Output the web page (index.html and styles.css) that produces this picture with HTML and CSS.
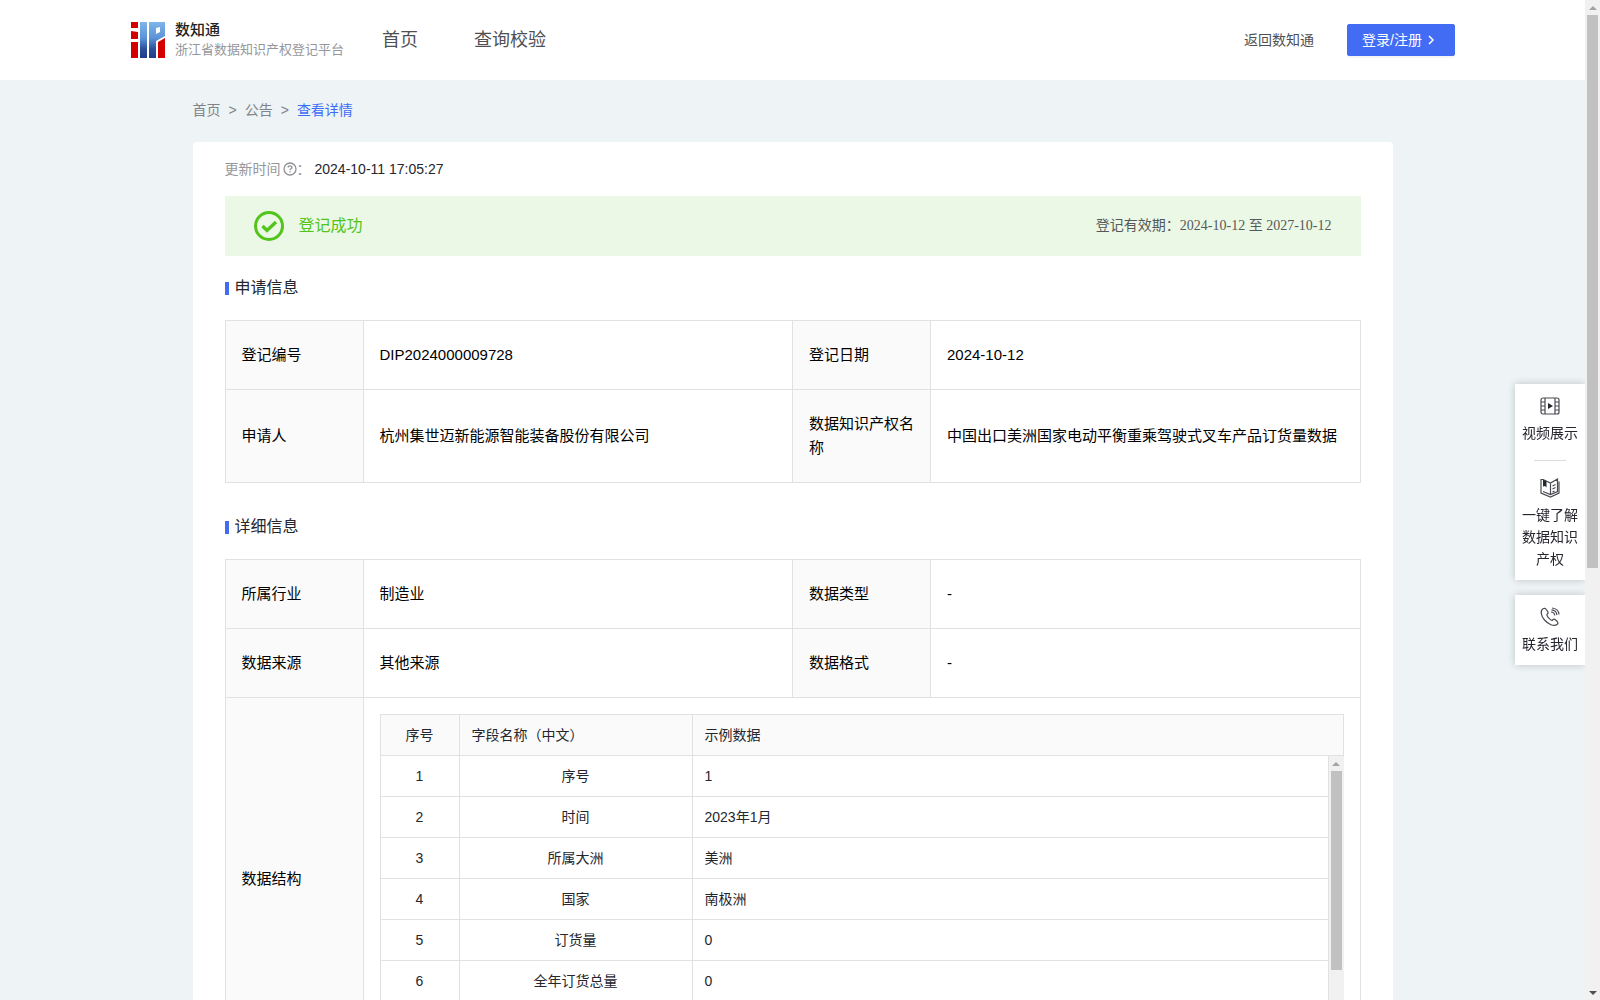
FILE: index.html
```html
<!DOCTYPE html>
<html lang="zh-CN">
<head>
    <meta charset="UTF-8">
    <meta name="viewport" content="width=device-width, initial-scale=1.0">
    <title>数知通</title>
    <link rel="stylesheet" href="styles.css">
</head>
<body>
    <div class="page">
        <header class="header">
            <a class="logo" href="#">
                <svg class="logo__icon" viewBox="0 0 34 36" width="34" height="36">
                    <defs>
                        <linearGradient id="blue" x1="0" y1="0" x2="0" y2="36" gradientUnits="userSpaceOnUse">
                            <stop offset="0" stop-color="#7fb5ea"/>
                            <stop offset="0.45" stop-color="#5b92d6"/>
                            <stop offset="0.75" stop-color="#2c4f9c"/>
                            <stop offset="1" stop-color="#233c86"/>
                        </linearGradient>
                    </defs>
                    <path fill="#d40000" d="M0 0h7v6H0zM0 9l7 1v7H0zM0 20h7v16H0zM27 20l7-4v20h-7z"/>
                    <path fill="url(#blue)" d="M9 0h7v36H9z"/>
                    <path fill="url(#blue)" fill-rule="evenodd" d="M18 0h16v14l-9 5v17h-7zM25 6v6l4-2V5z"/>
                </svg>
                <span class="logo__text">
                    <span class="logo__name">数知通</span>
                    <span class="logo__desc">浙江省数据知识产权登记平台</span>
                </span>
            </a>
            <nav class="nav">
                <a href="#">首页</a>
                <a href="#">查询校验</a>
            </nav>
            <a class="header__back" href="#">返回数知通</a>
            <button class="login" type="button">登录/注册
                <svg viewBox="0 0 8 10" width="8" height="10"><path d="M2 1l4 4-4 4" fill="none" stroke="#fff" stroke-width="1.5"/></svg>
            </button>
        </header>

        <main class="main">
            <nav class="crumbs">
                <a href="#">首页</a>
                <span>&gt;</span>
                <a href="#">公告</a>
                <span>&gt;</span>
                <a class="crumbs__current" href="#">查看详情</a>
            </nav>

            <div class="card">
                <div class="update">
                    <span class="update__label">更新时间</span>
                    <svg class="update__icon" viewBox="0 0 14 14" width="14" height="14" fill="none" stroke="#8f9197" stroke-width="1.3">
                        <circle cx="7" cy="7" r="6"/>
                        <path d="M5.1 5.6c0-2.4 3.8-2.4 3.8 0 0 1.2-1.9 1.3-1.9 2.7M7 9.3v1.3"/>
                    </svg>
                    <span class="update__label">：</span>
                    <span class="update__time">2024-10-11 17:05:27</span>
                </div>

                <div class="result">
                    <svg viewBox="0 0 30 30" width="30" height="30" fill="none" stroke="#52c41a">
                        <circle cx="15" cy="15" r="13.5" stroke-width="3"/>
                        <path d="M8.500 15l4.500 4.500L22 11" stroke-width="3.4"/>
                    </svg>
                    <span class="result__status">登记成功</span>
                    <span class="result__period">登记有效期：2024-10-12 至 2027-10-12</span>
                </div>

                <h2 class="title">申请信息</h2>
                <table class="info">
                    <colgroup><col class="info__name"><col><col class="info__name"><col></colgroup>
                    <tr>
                        <th scope="row">登记编号</th>
                        <td>DIP2024000009728</td>
                        <th scope="row">登记日期</th>
                        <td>2024-10-12</td>
                    </tr>
                    <tr>
                        <th scope="row">申请人</th>
                        <td>杭州集世迈新能源智能装备股份有限公司</td>
                        <th scope="row">数据知识产权名称</th>
                        <td>中国出口美洲国家电动平衡重乘驾驶式叉车产品订货量数据</td>
                    </tr>
                </table>

                <h2 class="title">详细信息</h2>
                <table class="info">
                    <colgroup><col class="info__name"><col><col class="info__name"><col></colgroup>
                    <tr>
                        <th scope="row">所属行业</th>
                        <td>制造业</td>
                        <th scope="row">数据类型</th>
                        <td>-</td>
                    </tr>
                    <tr>
                        <th scope="row">数据来源</th>
                        <td>其他来源</td>
                        <th scope="row">数据格式</th>
                        <td>-</td>
                    </tr>
                    <tr>
                        <th scope="row">数据结构</th>
                        <td class="info__fields" colspan="3">
                            <div class="fields">
                                <table class="fields__table fields__table_head">
                                    <colgroup><col class="fields__num"><col class="fields__name"><col></colgroup>
                                    <tr><th>序号</th><th>字段名称（中文）</th><th>示例数据</th></tr>
                                </table>
                                <div class="fields__body">
                                    <div class="fields__rows">
                                        <table class="fields__table">
                                            <colgroup><col class="fields__num"><col class="fields__name"><col></colgroup>
                                            <tr><td>1</td><td>序号</td><td>1</td></tr>
                                            <tr><td>2</td><td>时间</td><td>2023年1月</td></tr>
                                            <tr><td>3</td><td>所属大洲</td><td>美洲</td></tr>
                                            <tr><td>4</td><td>国家</td><td>南极洲</td></tr>
                                            <tr><td>5</td><td>订货量</td><td>0</td></tr>
                                            <tr><td>6</td><td>全年订货总量</td><td>0</td></tr>
                                        </table>
                                    </div>
                                    <div class="scroll">
                                        <span class="scroll__up"></span>
                                        <div class="scroll__track"><div class="scroll__thumb scroll__thumb_fields"></div></div>
                                        <span class="scroll__down"></span>
                                    </div>
                                </div>
                            </div>
                        </td>
                    </tr>
                </table>
            </div>
        </main>
    </div>

    <div class="scroll">
        <span class="scroll__up"></span>
        <div class="scroll__track"><div class="scroll__thumb scroll__thumb_page"></div></div>
        <span class="scroll__down"></span>
    </div>

    <aside class="side">
        <div class="side__box">
            <a class="side__item" href="#">
                <svg viewBox="0 0 20 20" width="20" height="20" fill="none" stroke="#4a4b52" stroke-width="1.2">
                    <rect x="1" y="2" width="18" height="16" rx="2"/>
                    <path d="M5 2v16M15 2v16M1 6h4M1 10h4M1 14h4M15 6h4M15 10h4M15 14h4"/>
                    <path d="M8 7l5 3-5 3z" fill="#25262e" stroke="none"/>
                </svg>
                视频展示
            </a>
            <a class="side__item" href="#">
                <svg viewBox="0 0 20 20" width="20" height="20" fill="none" stroke="#4a4b52" stroke-width="1.2">
                    <path d="M3 1.500H1v13.500l9.500 4L19 15V3.500M10.500 5v11.500M3 1.500l7.500 3.500L17.500 1v12.500l-7 3L3 13.500M12.500 8l3-1.500M12.500 11l3-1.500M12.500 14l2-1"/>
                    <path d="M3 1.500l3.500 1.700v6.300L5 8l-2 .5z" fill="#25262e" stroke="none"/>
                </svg>
                一键了解数据知识产权
            </a>
        </div>
        <div class="side__box">
            <a class="side__item" href="#">
                <svg viewBox="0 0 20 20" width="20" height="20" fill="none" stroke="#4a4b52" stroke-width="1.2">
                    <path d="M3 1.800C0 3.500 1 9 4.500 13s9.500 7 12.500 4.500c1.500-1.300 1-2.400 0-3.300l-2-1.700c-1.200-.9-2 .1-3 1-2-.7-4.700-3.700-5.200-5.700 1-1 2-1.600 1.100-3L6.300 2.500C5.500 1.200 4.200 1 3 1.800z"/>
                    <path d="M11 5c2 0 3.500 1.500 3.800 3.500M11.500 2.800c3 .2 5.200 2.400 5.400 5.200M12 1c4 .3 6.800 3 7 6.500"/>
                </svg>
                联系我们
            </a>
        </div>
    </aside>
</body>
</html>
```
FILE: styles.css
```css
* {
    box-sizing: border-box;
}
body {
    display: flex;
    height: 100vh;
    margin: 0;
    overflow: hidden;
    background-color: #eef3f6;
    color: #25262e;
    font-family: "Liberation Sans", "Noto Sans CJK SC", sans-serif;
    font-size: 14px;
    line-height: 24px;
}
a {
    color: inherit;
    text-decoration: none;
}
svg {
    display: block;
    flex: none;
}
.page {
    flex: 1;
    min-width: 0;
    overflow-y: auto;
    scrollbar-width: none;
}
.header {
    display: flex;
    align-items: center;
    height: 80px;
    padding: 0 130px;
    background-color: #fff;
    color: #4f5054;
}
.logo {
    display: flex;
    align-items: center;
    gap: 10px;
    margin-left: 1px;
}
.logo__text {
    display: flex;
    flex-direction: column;
    line-height: 20px;
}
.logo__name {
    color: #222;
    font-size: 15px;
    font-weight: 500;
}
.logo__desc {
    color: #96979b;
    font-size: 13px;
}
.nav {
    display: flex;
    gap: 56px;
    margin-left: 38px;
    font-size: 18px;
}
.header__back {
    margin-left: auto;
    margin-right: 33px;
}
.login {
    display: flex;
    align-items: center;
    gap: 5px;
    width: 108px;
    height: 32px;
    padding: 0 14px;
    border: 1px solid #436cf5;
    border-radius: 2px;
    background-color: #436cf5;
    box-shadow: 0 2px 0 rgba(0, 0, 0, 0.04);
    color: #fff;
    font: inherit;
    white-space: nowrap;
    cursor: pointer;
}
.main {
    max-width: 1200px;
    margin: 0 auto;
    padding-bottom: 32px;
}
.crumbs {
    display: flex;
    gap: 8px;
    padding: 18px 0 20px;
    color: #808389;
}
.crumbs__current {
    color: #3c6cf5;
}
.card {
    padding: 15px 32px 32px;
    border-radius: 4px;
    background-color: #fff;
}
.update {
    display: flex;
    align-items: center;
}
.update__label {
    color: #96979b;
}
.update__icon {
    margin-left: 2px;
}
.update__time {
    margin-left: 4px;
}
.result {
    display: flex;
    align-items: center;
    gap: 15px;
    height: 60px;
    margin-top: 15px;
    padding: 0 29px;
    background-color: #ebf8e6;
}
.result__status {
    color: #52c41a;
    font-size: 16px;
}
.result__period {
    margin-left: auto;
    color: #55585a;
    font-family: "Liberation Serif", "Noto Sans CJK SC", serif;
}
.title {
    display: flex;
    align-items: center;
    gap: 6px;
    margin: 20px 0;
    font-size: 16px;
    font-weight: 400;
}
.title::before {
    content: "";
    width: 4px;
    height: 13px;
    background-color: #436cf5;
}
.info {
    width: 100%;
    margin-bottom: 32px;
    border-collapse: collapse;
    table-layout: fixed;
    color: #000;
    font-size: 15px;
}
.info__name {
    width: 138px;
}
.info th, .info td {
    padding: 22px 16px;
    border: 1px solid #e1e1e1;
    font-weight: 400;
    text-align: left;
}
.info th {
    background-color: #fafafa;
}
.info .info__fields {
    padding: 16px;
}
.fields {
    color: #25262e;
    font-size: 14px;
}
.fields__body {
    display: flex;
    height: 288px;
}
.fields__rows {
    flex: 1;
    overflow-y: auto;
    scrollbar-width: none;
}
.fields__table {
    width: 100%;
    border-collapse: separate;
    border-spacing: 0;
    border-left: 1px solid #e1e1e1;
    table-layout: fixed;
    color: #25262e;
    font-size: 14px;
}
.fields__table_head {
    border-top: 1px solid #e1e1e1;
}
.fields__num {
    width: 79px;
}
.fields__name {
    width: 233px;
}
.info .fields__table th, .info .fields__table td {
    padding: 8px 12px;
    border-width: 0 1px 1px 0;
}
.info .fields__table td {
    text-align: center;
}
.info .fields__table th:first-child {
    text-align: center;
}
.info .fields__table td:last-child {
    text-align: left;
}
.scroll {
    display: flex;
    flex-direction: column;
    flex: none;
    align-items: center;
    width: 15px;
    background-color: #f1f1f1;
}
.scroll__up, .scroll__down {
    display: flex;
    align-items: center;
    justify-content: center;
    height: 15px;
}
.scroll__up::before, .scroll__down::before {
    content: "";
    border: 4px solid transparent;
    border-top-width: 0;
    border-bottom: 4px solid #a3a3a3;
}
.scroll__down::before {
    border-top: 4px solid #505050;
    border-bottom-width: 0;
}
.scroll__track {
    flex: 1;
    width: 11px;
}
.scroll__thumb {
    background-color: #c1c1c1;
}
.scroll__thumb_page {
    height: 57%;
}
.scroll__thumb_fields {
    height: 77%;
}
.side {
    position: fixed;
    top: 384px;
    right: 15px;
    display: flex;
    flex-direction: column;
    gap: 15px;
    width: 70px;
    line-height: 22px;
    text-align: center;
    clip-path: inset(-10px 0 -10px -10px);
}
.side__box {
    padding: 0 6px;
    background-color: #fff;
    box-shadow: 0 0 8px rgba(0, 0, 0, 0.2);
}
.side__item {
    display: flex;
    flex-direction: column;
    align-items: center;
    gap: 6px;
    padding: 12px 0 10px;
}
.side__item + .side__item {
    padding-top: 6px;
}
.side__item + .side__item::before {
    content: "";
    width: 32px;
    height: 1px;
    margin-bottom: 11px;
    background-color: #dcdcdc;
}
```
